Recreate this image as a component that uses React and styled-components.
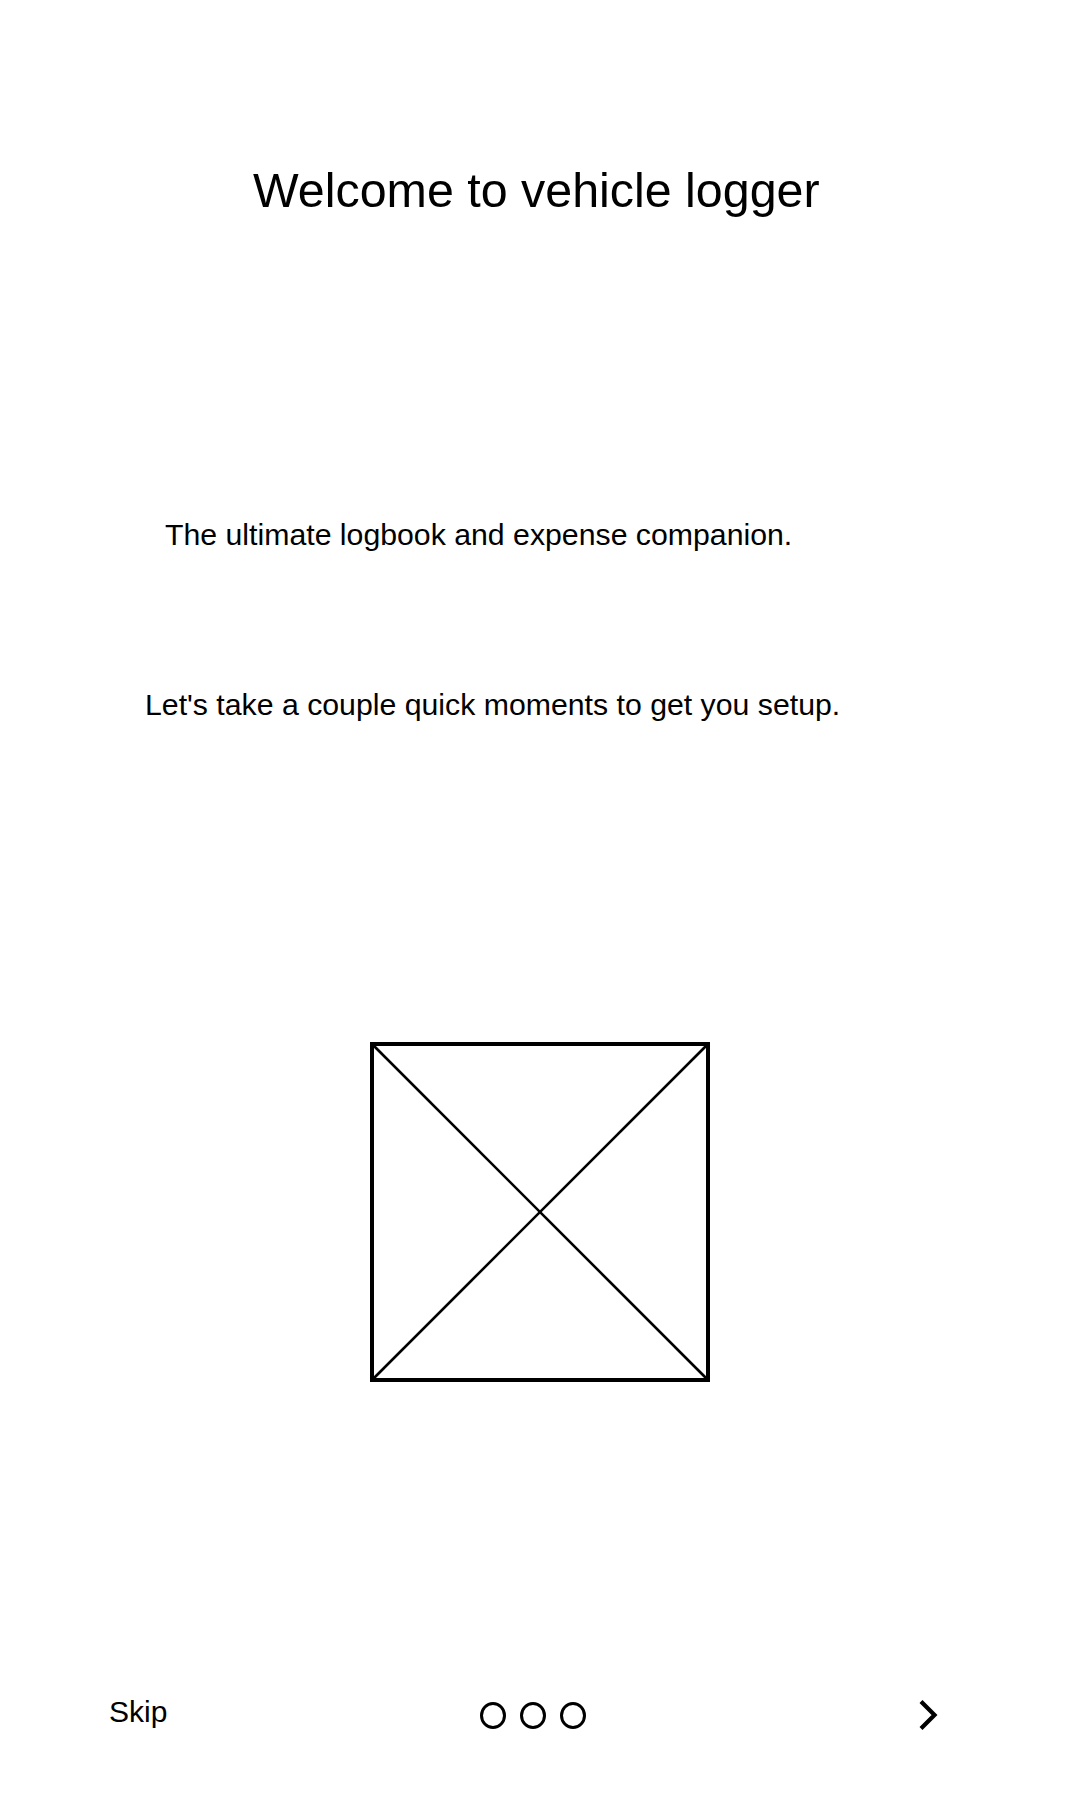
import React from 'react';
import styled, { createGlobalStyle } from 'styled-components';

const GlobalStyle = createGlobalStyle`
  html, body {
    margin: 0;
    padding: 0;
    background: #ffffff;
  }
  body {
    font-family: "Liberation Sans", Arial, sans-serif;
    color: #000;
  }
`;

const steps = [0, 1, 2];

const App = () => {
  return (
    <Page>
      <GlobalStyle />
      <Title>Welcome to vehicle logger</Title>
      <Line indent={165} top={306}>The ultimate logbook and expense companion.</Line>
      <Line indent={145} top={140}>Let's take a couple quick moments to get you setup.</Line>

      <Placeholder>
        <svg width="340" height="340" viewBox="0 0 340 340">
          <rect x="2" y="2" width="336" height="336" fill="none" stroke="#000" strokeWidth="4" />
          <line x1="3" y1="3" x2="337" y2="337" stroke="#000" strokeWidth="2.6" />
          <line x1="337" y1="3" x2="3" y2="337" stroke="#000" strokeWidth="2.6" />
        </svg>
      </Placeholder>

      <Footer>
        <Skip>Skip</Skip>
        <Dots>
          {steps.map((s) => (
            <Dot key={s} />
          ))}
        </Dots>
        <Next aria-label="next">
          <svg width="20" height="32" viewBox="0 0 20 32">
            <polyline points="3,2.5 16.5,16 3,29.5" fill="none" stroke="#000" strokeWidth="4.2" />
          </svg>
        </Next>
      </Footer>
    </Page>
  );
};

export default App;

const Page = styled.div`
width: 1080px;
min-height: 1800px;
display: flex;
flex-direction: column;
background: #fff;
`;

const Title = styled.h1`
margin: 0;
padding: 166px 0 0 253px;
font-size: 48.4px;
line-height: 48px;
font-weight: normal;
white-space: nowrap;
`;

const Line = styled.p`
margin: ${(p) => p.top}px 0 0 0;
padding-left: ${(p) => p.indent}px;
font-size: 30.25px;
line-height: 30px;
white-space: nowrap;
`;

const Placeholder = styled.div`
margin: 322px 0 0 370px;
width: 340px;
height: 340px;

svg {
    display: block;
}
`;

const Footer = styled.div`
margin-top: 303px;
height: 60px;
display: flex;
align-items: center;
padding-left: 109px;
`;

const Skip = styled.span`
font-size: 30px;
line-height: 30px;
width: 58px;
margin-bottom: 7px;
`;

const Dots = styled.div`
display: flex;
gap: 14px;
margin-left: 313px;
`;

const Dot = styled.span`
width: 26px;
height: 27px;
box-sizing: border-box;
border: 3px solid #000;
border-radius: 50%;
`;

const Next = styled.div`
margin-left: 332px;
display: flex;
align-items: center;

svg {
    display: block;
}
`;
